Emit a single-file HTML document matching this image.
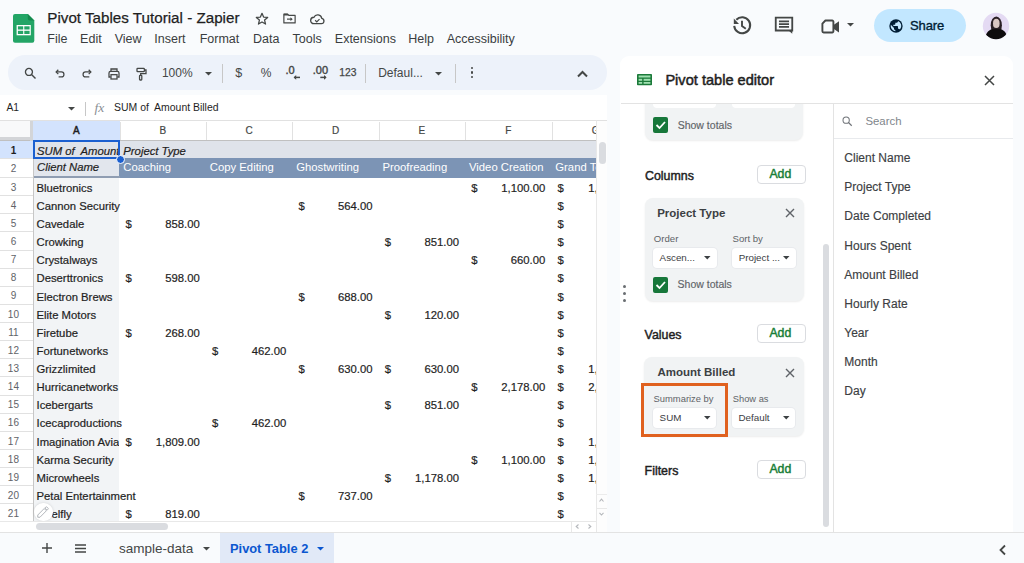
<!DOCTYPE html>
<html><head><meta charset="utf-8"><style>
html,body{margin:0;padding:0;}
body{width:1024px;height:563px;overflow:hidden;position:relative;background:#f9fbfd;font-family:"Liberation Sans", sans-serif;}
.t{position:absolute;white-space:nowrap;line-height:1;}
.g .t{-webkit-text-stroke:0.2px currentColor;}
.r{position:absolute;}
svg.r{overflow:visible}
</style></head><body>
<svg class="r" style="left:12.90px;top:13.80px;" width="21.3" height="28.8" viewBox="0 0 21.3 28.8"><path d="M2 0h12.8l6.5 6.5v20.3a2 2 0 0 1-2 2H2a2 2 0 0 1-2-2V2a2 2 0 0 1 2-2z" fill="#23a566"/><path d="M14.8 0l6.5 6.5h-4.5a2 2 0 0 1-2-2z" fill="#158a4e"/><rect x="3.6" y="11" width="14.2" height="10.3" fill="#fff"/><rect x="4.9" y="12.3" width="5.3" height="3.2" fill="#23a566"/><rect x="11.3" y="12.3" width="5.3" height="3.2" fill="#23a566"/><rect x="4.9" y="16.8" width="5.3" height="3.2" fill="#23a566"/><rect x="11.3" y="16.8" width="5.3" height="3.2" fill="#23a566"/></svg>
<div class="t" style="left:47.30px;top:10.00px;font-size:15.2px;color:#1f1f1f;font-weight:normal;-webkit-text-stroke:0.25px #1f1f1f;">Pivot Tables Tutorial - Zapier</div>
<svg class="r" style="left:254.00px;top:10.80px;" width="16" height="16" viewBox="0 0 24 24"><path d="M12 3.5l2.4 5.6 6.1.5-4.6 4 1.4 6L12 16.4 6.7 19.6l1.4-6-4.6-4 6.1-.5z" fill="none" stroke="#444746" stroke-width="1.9" stroke-linejoin="round"/></svg>
<svg class="r" style="left:281.50px;top:11.00px;" width="15" height="15" viewBox="0 0 24 24"><path d="M3 5h6l2 2h10v12H3z" fill="none" stroke="#444746" stroke-width="1.9" stroke-linejoin="round"/><path d="M3 4.5h6l2 2.5H3z" fill="#444746"/><path d="M8 13h7" stroke="#444746" stroke-width="1.9"/><path d="M13.5 10l3.6 3-3.6 3z" fill="#444746"/></svg>
<svg class="r" style="left:308.50px;top:10.50px;" width="16.5" height="16.5" viewBox="0 0 24 24"><path d="M7 18.5h11a4 4 0 0 0 .6-7.9A6 6 0 0 0 7.2 9.1 4.7 4.7 0 0 0 7 18.5z" fill="none" stroke="#444746" stroke-width="1.9"/><path d="M9 13.5l2.3 2.3 4-4" fill="none" stroke="#444746" stroke-width="1.8"/></svg>
<div class="t" style="left:47.30px;top:33.00px;font-size:12.5px;color:#3a3d40;font-weight:normal;">File</div>
<div class="t" style="left:80.10px;top:33.00px;font-size:12.5px;color:#3a3d40;font-weight:normal;">Edit</div>
<div class="t" style="left:114.70px;top:33.00px;font-size:12.5px;color:#3a3d40;font-weight:normal;">View</div>
<div class="t" style="left:154.30px;top:33.00px;font-size:12.5px;color:#3a3d40;font-weight:normal;">Insert</div>
<div class="t" style="left:199.70px;top:33.00px;font-size:12.5px;color:#3a3d40;font-weight:normal;">Format</div>
<div class="t" style="left:253.00px;top:33.00px;font-size:12.5px;color:#3a3d40;font-weight:normal;">Data</div>
<div class="t" style="left:292.60px;top:33.00px;font-size:12.5px;color:#3a3d40;font-weight:normal;">Tools</div>
<div class="t" style="left:334.80px;top:33.00px;font-size:12.5px;color:#3a3d40;font-weight:normal;">Extensions</div>
<div class="t" style="left:408.20px;top:33.00px;font-size:12.5px;color:#3a3d40;font-weight:normal;">Help</div>
<div class="t" style="left:446.70px;top:33.00px;font-size:12.5px;color:#3a3d40;font-weight:normal;">Accessibility</div>
<svg class="r" style="left:730.00px;top:13.00px;" width="25" height="25" viewBox="0 0 25 25"><path d="M4.2 12.9A8 8 0 1 0 6.3 6.8" fill="none" stroke="#444746" stroke-width="2"/><path d="M3.8 5.6v5.4h5.2z" fill="#444746"/><path d="M12 7.8V13l3.8 2.7" fill="none" stroke="#444746" stroke-width="1.9"/></svg>
<svg class="r" style="left:773.00px;top:14.00px;" width="22" height="22" viewBox="0 0 24 24"><path d="M3 4h18v14H7l-4 0z" fill="none" stroke="#444746" stroke-width="2"/><path d="M17 18l4 3.5V17" fill="#444746"/><path d="M6.5 8h11M6.5 11h11M6.5 14h11" stroke="#444746" stroke-width="1.8"/></svg>
<svg class="r" style="left:819.00px;top:14.00px;" width="24" height="24" viewBox="0 0 24 24"><path d="M6.4 6.5H13.2a1.2 1.2 0 0 1 1.2 1.2V17.3a1.2 1.2 0 0 1-1.2 1.2H4.6a1.2 1.2 0 0 1-1.2-1.2V9.7z" fill="none" stroke="#444746" stroke-width="1.9" stroke-linejoin="round"/><path d="M14.2 11.2l5.8-4v11.2l-5.8-4z" fill="#444746"/></svg>
<svg class="r" style="left:847.00px;top:23.00px;" width="7" height="4" viewBox="0 0 7 4"><path d="M0 0h7L3.5 3.5z" fill="#444746"/></svg>
<div class="r" style="left:873.80px;top:8.50px;width:92.00px;height:33.00px;background:#c2e7ff;border-radius:17px"></div>
<svg class="r" style="left:888.20px;top:17.50px;" width="16" height="16" viewBox="0 0 24 24"><circle cx="12" cy="12" r="10" fill="#001d35"/><path d="M11 19.9A8 8 0 0 1 4.2 10.2L9 15v1a2 2 0 0 0 2 2zm6.9-2.5a2 2 0 0 0-1.9-1.4h-1v-3a1 1 0 0 0-1-1H8v-2h2a1 1 0 0 0 1-1V7h2a2 2 0 0 0 2-2v-.4a8 8 0 0 1 2.9 12.8z" fill="#c2e7ff"/></svg>
<div class="t" style="left:910.00px;top:19.00px;font-size:13px;color:#001d35;font-weight:normal;-webkit-text-stroke:0.35px #001d35;letter-spacing:-0.1px;">Share</div>
<svg class="r" style="left:981.80px;top:11.50px;" width="28" height="28" viewBox="0 0 28 28"><defs><clipPath id="av"><circle cx="14" cy="14" r="13.2"/></clipPath></defs><circle cx="14" cy="14" r="13.2" fill="#e4daf3"/><g clip-path="url(#av)"><ellipse cx="14.3" cy="13.2" rx="5.6" ry="8.6" fill="#2a1f25"/><ellipse cx="14.3" cy="11.4" rx="3.3" ry="4.6" fill="#d9c6c2"/><path d="M2.5 29C3 21.5 6.5 18.5 9.5 17.3h9.6c3 1.2 6.5 4.2 7 11.7z" fill="#0e0c0d"/></g></svg>
<div class="r" style="left:7.80px;top:55.40px;width:599.00px;height:34.40px;background:#edf2fa;border-radius:17.2px"></div>
<svg class="r" style="left:23.00px;top:65.50px;" width="15" height="15" viewBox="0 0 24 24"><circle cx="9.5" cy="9.5" r="5.6" fill="none" stroke="#444746" stroke-width="2.1"/><path d="M13.6 13.6l6.4 6.4" stroke="#444746" stroke-width="2.3"/></svg>
<svg class="r" style="left:52.50px;top:66.00px;" width="15" height="15" viewBox="0 0 24 24"><path d="M8.5 6L5 9.5 8.5 13" fill="none" stroke="#444746" stroke-width="2"/><path d="M5.5 9.5H13.5a4 4 0 0 1 0 8H9" fill="none" stroke="#444746" stroke-width="2"/></svg>
<svg class="r" style="left:79.00px;top:66.00px;" width="15" height="15" viewBox="0 0 24 24"><path d="M15.5 6L19 9.5 15.5 13" fill="none" stroke="#444746" stroke-width="2"/><path d="M18.5 9.5H10.5a4 4 0 0 0 0 8h6" fill="none" stroke="#444746" stroke-width="2"/></svg>
<svg class="r" style="left:106.00px;top:65.50px;" width="16" height="16" viewBox="0 0 24 24"><path d="M7.5 8V4.5h9V8" fill="none" stroke="#444746" stroke-width="1.9"/><path d="M7 16.5H4.5v-6A2.5 2.5 0 0 1 7 8h10a2.5 2.5 0 0 1 2.5 2.5v6H17" fill="none" stroke="#444746" stroke-width="1.9"/><rect x="7.5" y="13" width="9" height="6.5" fill="none" stroke="#444746" stroke-width="1.9"/></svg>
<svg class="r" style="left:132.50px;top:65.50px;" width="16" height="16" viewBox="0 0 24 24"><rect x="6" y="3.5" width="11" height="5" rx="1" fill="none" stroke="#444746" stroke-width="1.9"/><path d="M17 6h2.5v5.5h-8v2.5" fill="none" stroke="#444746" stroke-width="1.9"/><rect x="9.8" y="14" width="3.4" height="7" rx="1" fill="none" stroke="#444746" stroke-width="1.9"/></svg>
<div class="t" style="left:161.90px;top:67.00px;font-size:12px;color:#444746;font-weight:normal;">100%</div>
<svg class="r" style="left:204.50px;top:71.50px;" width="7" height="4" viewBox="0 0 7 4"><path d="M0 0h7L3.5 3.5z" fill="#444746"/></svg>
<div class="r" style="left:222.20px;top:64.00px;width:1.00px;height:19.00px;background:#c7c7c7"></div>
<div class="t" style="left:138.80px;width:200px;text-align:center;top:67.00px;font-size:12.5px;color:#444746;font-weight:normal;">$</div>
<div class="t" style="left:166.00px;width:200px;text-align:center;top:67.00px;font-size:12px;color:#444746;font-weight:normal;">%</div>
<svg class="r" style="left:283.00px;top:63.00px;" width="18" height="20" viewBox="0 0 18 20"><text x="2.5" y="10.6" font-family="Liberation Sans" font-size="11" fill="#444746" stroke="#444746" stroke-width="0.4">.0</text><path d="M17 14.4h-5.8" stroke="#444746" stroke-width="1.5"/><path d="M13.2 12l-2.6 2.4 2.6 2.4z" fill="#444746"/></svg>
<svg class="r" style="left:310.00px;top:63.00px;" width="22" height="20" viewBox="0 0 22 20"><text x="2.8" y="10.6" font-family="Liberation Sans" font-size="11" fill="#444746" stroke="#444746" stroke-width="0.4">.00</text><path d="M10.3 14.4h5.6" stroke="#444746" stroke-width="1.5"/><path d="M14 12l2.6 2.4-2.6 2.4z" fill="#444746"/></svg>
<div class="t" style="left:247.90px;width:200px;text-align:center;top:68.00px;font-size:10.3px;color:#444746;font-weight:normal;-webkit-text-stroke:0.25px #444746;">123</div>
<div class="r" style="left:365.20px;top:64.00px;width:1.00px;height:19.00px;background:#c7c7c7"></div>
<div class="t" style="left:378.20px;top:67.00px;font-size:12px;color:#444746;font-weight:normal;">Defaul...</div>
<svg class="r" style="left:435.30px;top:71.50px;" width="7" height="4" viewBox="0 0 7 4"><path d="M0 0h7L3.5 3.5z" fill="#444746"/></svg>
<div class="r" style="left:454.50px;top:64.00px;width:1.00px;height:19.00px;background:#c7c7c7"></div>
<div class="r" style="left:470.80px;top:66.95px;width:2.50px;height:2.50px;background:#444746;border-radius:50%"></div>
<div class="r" style="left:470.80px;top:71.45px;width:2.50px;height:2.50px;background:#444746;border-radius:50%"></div>
<div class="r" style="left:470.80px;top:75.95px;width:2.50px;height:2.50px;background:#444746;border-radius:50%"></div>
<svg class="r" style="left:575.00px;top:66.00px;" width="15" height="15" viewBox="0 0 15 15"><path d="M3 10.5L7.5 6l4.5 4.5" fill="none" stroke="#444746" stroke-width="2"/></svg>
<div class="r" style="left:0.00px;top:95.00px;width:607.00px;height:25.50px;background:#fff"></div>
<div class="t" style="left:6.50px;top:103.00px;font-size:10.3px;color:#1f1f1f;font-weight:normal;">A1</div>
<svg class="r" style="left:68.00px;top:106.50px;" width="7" height="4" viewBox="0 0 7 4"><path d="M0 0h7L3.5 3.5z" fill="#444746"/></svg>
<div class="r" style="left:85.00px;top:102.00px;width:1.00px;height:14.00px;background:#c7c7c7"></div>
<div class="t" style="left:94.50px;top:101.00px;font-size:13.5px;color:#8a8f94;font-weight:normal;"><i style="font-family:Liberation Serif">fx</i></div>
<div class="t" style="left:114.10px;top:103.00px;font-size:10.45px;color:#1f1f1f;font-weight:normal;">SUM of&nbsp; Amount Billed</div>
<div class="r g" style="left:0;top:0;width:596px;height:521px;overflow:hidden">
<div class="r" style="left:0.00px;top:120.50px;width:596.00px;height:400.50px;background:#fff"></div>
<div class="r" style="left:0.00px;top:120.00px;width:596.00px;height:1.00px;background:#e1e1e1"></div>
<div class="r" style="left:0.00px;top:140.00px;width:596.00px;height:1.00px;background:#c0c0c0"></div>
<div class="r" style="left:33.00px;top:121.00px;width:86.50px;height:19.00px;background:#d3e3fd"></div>
<div class="r" style="left:0.00px;top:121.00px;width:30.00px;height:16.30px;background:#f8f9fa"></div>
<div class="r" style="left:30.00px;top:121.00px;width:3.00px;height:19.50px;background:#d3d5d8"></div>
<div class="r" style="left:0.00px;top:137.30px;width:33.00px;height:3.00px;background:#d3d5d8"></div>
<div class="r" style="left:119.50px;top:121.50px;width:1.00px;height:18.50px;background:#e1e1e1"></div>
<div class="r" style="left:206.00px;top:121.50px;width:1.00px;height:18.50px;background:#e1e1e1"></div>
<div class="r" style="left:292.40px;top:121.50px;width:1.00px;height:18.50px;background:#e1e1e1"></div>
<div class="r" style="left:378.70px;top:121.50px;width:1.00px;height:18.50px;background:#e1e1e1"></div>
<div class="r" style="left:465.20px;top:121.50px;width:1.00px;height:18.50px;background:#e1e1e1"></div>
<div class="r" style="left:551.50px;top:121.50px;width:1.00px;height:18.50px;background:#e1e1e1"></div>
<div class="t" style="left:-23.75px;width:200px;text-align:center;top:126.00px;font-size:10px;color:#1f1f1f;font-weight:normal;-webkit-text-stroke:0.45px #1f1f1f;">A</div>
<div class="t" style="left:62.75px;width:200px;text-align:center;top:126.00px;font-size:10px;color:#444746;font-weight:normal;">B</div>
<div class="t" style="left:149.20px;width:200px;text-align:center;top:126.00px;font-size:10px;color:#444746;font-weight:normal;">C</div>
<div class="t" style="left:235.55px;width:200px;text-align:center;top:126.00px;font-size:10px;color:#444746;font-weight:normal;">D</div>
<div class="t" style="left:321.95px;width:200px;text-align:center;top:126.00px;font-size:10px;color:#444746;font-weight:normal;">E</div>
<div class="t" style="left:408.35px;width:200px;text-align:center;top:126.00px;font-size:10px;color:#444746;font-weight:normal;">F</div>
<div class="t" style="left:495.75px;width:200px;text-align:center;top:126.00px;font-size:10px;color:#444746;font-weight:normal;">G</div>
<div class="r" style="left:33.00px;top:140.80px;width:563.00px;height:17.90px;background:#dfe3ea"></div>
<div class="r" style="left:0.00px;top:140.80px;width:33.00px;height:17.90px;background:#d3e3fd"></div>
<div class="r" style="left:33.00px;top:158.50px;width:86.50px;height:18.00px;background:#e2e6ed"></div>
<div class="r" style="left:119.20px;top:158.40px;width:476.80px;height:20.00px;background:#7c94b5"></div>
<div class="r" style="left:33.00px;top:176.30px;width:86.50px;height:2.10px;background:#8f9db2"></div>
<div class="r" style="left:33.00px;top:177.50px;width:85.50px;height:343.50px;background:#f2f4f6"></div>
<div class="r" style="left:33.00px;top:141.00px;width:1.00px;height:380.00px;background:#c7c7c7"></div>
<div class="r" style="left:0.00px;top:158.20px;width:33.00px;height:1.00px;background:#e1e1e1"></div>
<div class="r" style="left:0.00px;top:177.00px;width:33.00px;height:1.00px;background:#e1e1e1"></div>
<div class="r" style="left:0.00px;top:195.13px;width:33.00px;height:1.00px;background:#e1e1e1"></div>
<div class="r" style="left:0.00px;top:213.26px;width:33.00px;height:1.00px;background:#e1e1e1"></div>
<div class="r" style="left:0.00px;top:231.39px;width:33.00px;height:1.00px;background:#e1e1e1"></div>
<div class="r" style="left:0.00px;top:249.52px;width:33.00px;height:1.00px;background:#e1e1e1"></div>
<div class="r" style="left:0.00px;top:267.65px;width:33.00px;height:1.00px;background:#e1e1e1"></div>
<div class="r" style="left:0.00px;top:285.78px;width:33.00px;height:1.00px;background:#e1e1e1"></div>
<div class="r" style="left:0.00px;top:303.91px;width:33.00px;height:1.00px;background:#e1e1e1"></div>
<div class="r" style="left:0.00px;top:322.04px;width:33.00px;height:1.00px;background:#e1e1e1"></div>
<div class="r" style="left:0.00px;top:340.17px;width:33.00px;height:1.00px;background:#e1e1e1"></div>
<div class="r" style="left:0.00px;top:358.30px;width:33.00px;height:1.00px;background:#e1e1e1"></div>
<div class="r" style="left:0.00px;top:376.43px;width:33.00px;height:1.00px;background:#e1e1e1"></div>
<div class="r" style="left:0.00px;top:394.56px;width:33.00px;height:1.00px;background:#e1e1e1"></div>
<div class="r" style="left:0.00px;top:412.69px;width:33.00px;height:1.00px;background:#e1e1e1"></div>
<div class="r" style="left:0.00px;top:430.82px;width:33.00px;height:1.00px;background:#e1e1e1"></div>
<div class="r" style="left:0.00px;top:448.95px;width:33.00px;height:1.00px;background:#e1e1e1"></div>
<div class="r" style="left:0.00px;top:467.08px;width:33.00px;height:1.00px;background:#e1e1e1"></div>
<div class="r" style="left:0.00px;top:485.21px;width:33.00px;height:1.00px;background:#e1e1e1"></div>
<div class="r" style="left:0.00px;top:503.34px;width:33.00px;height:1.00px;background:#e1e1e1"></div>
<div class="r" style="left:0.00px;top:521.47px;width:33.00px;height:1.00px;background:#e1e1e1"></div>
<div class="t" style="left:-86.60px;width:200px;text-align:center;top:146.00px;font-size:10px;color:#1f1f1f;font-weight:bold;-webkit-text-stroke:0;">1</div>
<div class="t" style="left:-86.60px;width:200px;text-align:center;top:164.00px;font-size:10px;color:#5f6368;font-weight:normal;-webkit-text-stroke:0;">2</div>
<div class="t" style="left:-86.60px;width:200px;text-align:center;top:183.00px;font-size:10px;color:#5f6368;font-weight:normal;-webkit-text-stroke:0;">3</div>
<div class="t" style="left:-86.60px;width:200px;text-align:center;top:201.00px;font-size:10px;color:#5f6368;font-weight:normal;-webkit-text-stroke:0;">4</div>
<div class="t" style="left:-86.60px;width:200px;text-align:center;top:219.00px;font-size:10px;color:#5f6368;font-weight:normal;-webkit-text-stroke:0;">5</div>
<div class="t" style="left:-86.60px;width:200px;text-align:center;top:237.00px;font-size:10px;color:#5f6368;font-weight:normal;-webkit-text-stroke:0;">6</div>
<div class="t" style="left:-86.60px;width:200px;text-align:center;top:255.00px;font-size:10px;color:#5f6368;font-weight:normal;-webkit-text-stroke:0;">7</div>
<div class="t" style="left:-86.60px;width:200px;text-align:center;top:273.00px;font-size:10px;color:#5f6368;font-weight:normal;-webkit-text-stroke:0;">8</div>
<div class="t" style="left:-86.60px;width:200px;text-align:center;top:291.00px;font-size:10px;color:#5f6368;font-weight:normal;-webkit-text-stroke:0;">9</div>
<div class="t" style="left:-86.60px;width:200px;text-align:center;top:310.00px;font-size:10px;color:#5f6368;font-weight:normal;-webkit-text-stroke:0;">10</div>
<div class="t" style="left:-86.60px;width:200px;text-align:center;top:328.00px;font-size:10px;color:#5f6368;font-weight:normal;-webkit-text-stroke:0;">11</div>
<div class="t" style="left:-86.60px;width:200px;text-align:center;top:346.00px;font-size:10px;color:#5f6368;font-weight:normal;-webkit-text-stroke:0;">12</div>
<div class="t" style="left:-86.60px;width:200px;text-align:center;top:364.00px;font-size:10px;color:#5f6368;font-weight:normal;-webkit-text-stroke:0;">13</div>
<div class="t" style="left:-86.60px;width:200px;text-align:center;top:382.00px;font-size:10px;color:#5f6368;font-weight:normal;-webkit-text-stroke:0;">14</div>
<div class="t" style="left:-86.60px;width:200px;text-align:center;top:400.00px;font-size:10px;color:#5f6368;font-weight:normal;-webkit-text-stroke:0;">15</div>
<div class="t" style="left:-86.60px;width:200px;text-align:center;top:418.00px;font-size:10px;color:#5f6368;font-weight:normal;-webkit-text-stroke:0;">16</div>
<div class="t" style="left:-86.60px;width:200px;text-align:center;top:437.00px;font-size:10px;color:#5f6368;font-weight:normal;-webkit-text-stroke:0;">17</div>
<div class="t" style="left:-86.60px;width:200px;text-align:center;top:455.00px;font-size:10px;color:#5f6368;font-weight:normal;-webkit-text-stroke:0;">18</div>
<div class="t" style="left:-86.60px;width:200px;text-align:center;top:473.00px;font-size:10px;color:#5f6368;font-weight:normal;-webkit-text-stroke:0;">19</div>
<div class="t" style="left:-86.60px;width:200px;text-align:center;top:491.00px;font-size:10px;color:#5f6368;font-weight:normal;-webkit-text-stroke:0;">20</div>
<div class="t" style="left:-86.60px;width:200px;text-align:center;top:509.00px;font-size:10px;color:#5f6368;font-weight:normal;-webkit-text-stroke:0;">21</div>
<div class="r" style="left:33.00px;top:140.30px;width:87.00px;height:18.90px;border:2px solid #1a5fd0;box-sizing:border-box"></div>
<div class="r" style="left:116.20px;top:154.80px;width:7.00px;height:7.00px;background:#1a5fd0;border-radius:50%;border:1px solid #fff;box-sizing:content-box"></div>
<div class="t" style="left:37px;top:146px;font-size:11.3px;width:81px;overflow:hidden;color:#1f1f1f;font-style:italic">SUM of&nbsp; Amount Billed</div>
<div class="t" style="left:123.30px;top:146.00px;font-size:11.3px;color:#1f1f1f;font-weight:normal;font-style:italic;">Project Type</div>
<div class="t" style="left:37.00px;top:162.00px;font-size:11.3px;color:#1f1f1f;font-weight:normal;font-style:italic;">Client Name</div>
<div class="t" style="left:123.30px;top:162.00px;font-size:11.3px;color:#ffffff;font-weight:normal;-webkit-text-stroke:0;">Coaching</div>
<div class="t" style="left:209.80px;top:162.00px;font-size:11.3px;color:#ffffff;font-weight:normal;-webkit-text-stroke:0;">Copy Editing</div>
<div class="t" style="left:296.20px;top:162.00px;font-size:11.3px;color:#ffffff;font-weight:normal;-webkit-text-stroke:0;">Ghostwriting</div>
<div class="t" style="left:382.50px;top:162.00px;font-size:11.3px;color:#ffffff;font-weight:normal;-webkit-text-stroke:0;">Proofreading</div>
<div class="t" style="left:469.00px;top:162.00px;font-size:11.3px;color:#ffffff;font-weight:normal;-webkit-text-stroke:0;">Video Creation</div>
<div class="t" style="left:555.30px;top:162.00px;font-size:11.3px;color:#ffffff;font-weight:normal;-webkit-text-stroke:0;">Grand Total</div>
<div class="t" style="left:36.50px;top:183.00px;font-size:11.3px;color:#1f1f1f;font-weight:normal;">Bluetronics</div>
<div class="t" style="left:471.20px;top:183.00px;font-size:11.3px;color:#1f1f1f;font-weight:normal;">$</div>
<div class="t" style="left:245.30px;width:300px;text-align:right;top:183.00px;font-size:11.3px;color:#1f1f1f;font-weight:normal;">1,100.00</div>
<div class="t" style="left:557.50px;top:183.00px;font-size:11.3px;color:#1f1f1f;font-weight:normal;">$</div>
<div class="t" style="left:588.30px;top:183.00px;font-size:11.3px;color:#1f1f1f;font-weight:normal;">1,</div>
<div class="t" style="left:36.50px;top:201.00px;font-size:11.3px;color:#1f1f1f;font-weight:normal;">Cannon Security</div>
<div class="t" style="left:298.40px;top:201.00px;font-size:11.3px;color:#1f1f1f;font-weight:normal;">$</div>
<div class="t" style="left:72.50px;width:300px;text-align:right;top:201.00px;font-size:11.3px;color:#1f1f1f;font-weight:normal;">564.00</div>
<div class="t" style="left:557.50px;top:201.00px;font-size:11.3px;color:#1f1f1f;font-weight:normal;">$</div>
<div class="t" style="left:36.50px;top:219.00px;font-size:11.3px;color:#1f1f1f;font-weight:normal;">Cavedale</div>
<div class="t" style="left:125.50px;top:219.00px;font-size:11.3px;color:#1f1f1f;font-weight:normal;">$</div>
<div class="t" style="left:-100.20px;width:300px;text-align:right;top:219.00px;font-size:11.3px;color:#1f1f1f;font-weight:normal;">858.00</div>
<div class="t" style="left:557.50px;top:219.00px;font-size:11.3px;color:#1f1f1f;font-weight:normal;">$</div>
<div class="t" style="left:36.50px;top:237.00px;font-size:11.3px;color:#1f1f1f;font-weight:normal;">Crowking</div>
<div class="t" style="left:384.70px;top:237.00px;font-size:11.3px;color:#1f1f1f;font-weight:normal;">$</div>
<div class="t" style="left:159.00px;width:300px;text-align:right;top:237.00px;font-size:11.3px;color:#1f1f1f;font-weight:normal;">851.00</div>
<div class="t" style="left:557.50px;top:237.00px;font-size:11.3px;color:#1f1f1f;font-weight:normal;">$</div>
<div class="t" style="left:36.50px;top:255.00px;font-size:11.3px;color:#1f1f1f;font-weight:normal;">Crystalways</div>
<div class="t" style="left:471.20px;top:255.00px;font-size:11.3px;color:#1f1f1f;font-weight:normal;">$</div>
<div class="t" style="left:245.30px;width:300px;text-align:right;top:255.00px;font-size:11.3px;color:#1f1f1f;font-weight:normal;">660.00</div>
<div class="t" style="left:557.50px;top:255.00px;font-size:11.3px;color:#1f1f1f;font-weight:normal;">$</div>
<div class="t" style="left:36.50px;top:273.00px;font-size:11.3px;color:#1f1f1f;font-weight:normal;">Deserttronics</div>
<div class="t" style="left:125.50px;top:273.00px;font-size:11.3px;color:#1f1f1f;font-weight:normal;">$</div>
<div class="t" style="left:-100.20px;width:300px;text-align:right;top:273.00px;font-size:11.3px;color:#1f1f1f;font-weight:normal;">598.00</div>
<div class="t" style="left:557.50px;top:273.00px;font-size:11.3px;color:#1f1f1f;font-weight:normal;">$</div>
<div class="t" style="left:36.50px;top:292.00px;font-size:11.3px;color:#1f1f1f;font-weight:normal;">Electron Brews</div>
<div class="t" style="left:298.40px;top:292.00px;font-size:11.3px;color:#1f1f1f;font-weight:normal;">$</div>
<div class="t" style="left:72.50px;width:300px;text-align:right;top:292.00px;font-size:11.3px;color:#1f1f1f;font-weight:normal;">688.00</div>
<div class="t" style="left:557.50px;top:292.00px;font-size:11.3px;color:#1f1f1f;font-weight:normal;">$</div>
<div class="t" style="left:36.50px;top:310.00px;font-size:11.3px;color:#1f1f1f;font-weight:normal;">Elite Motors</div>
<div class="t" style="left:384.70px;top:310.00px;font-size:11.3px;color:#1f1f1f;font-weight:normal;">$</div>
<div class="t" style="left:159.00px;width:300px;text-align:right;top:310.00px;font-size:11.3px;color:#1f1f1f;font-weight:normal;">120.00</div>
<div class="t" style="left:557.50px;top:310.00px;font-size:11.3px;color:#1f1f1f;font-weight:normal;">$</div>
<div class="t" style="left:36.50px;top:328.00px;font-size:11.3px;color:#1f1f1f;font-weight:normal;">Firetube</div>
<div class="t" style="left:125.50px;top:328.00px;font-size:11.3px;color:#1f1f1f;font-weight:normal;">$</div>
<div class="t" style="left:-100.20px;width:300px;text-align:right;top:328.00px;font-size:11.3px;color:#1f1f1f;font-weight:normal;">268.00</div>
<div class="t" style="left:557.50px;top:328.00px;font-size:11.3px;color:#1f1f1f;font-weight:normal;">$</div>
<div class="t" style="left:36.50px;top:346.00px;font-size:11.3px;color:#1f1f1f;font-weight:normal;">Fortunetworks</div>
<div class="t" style="left:212.00px;top:346.00px;font-size:11.3px;color:#1f1f1f;font-weight:normal;">$</div>
<div class="t" style="left:-13.80px;width:300px;text-align:right;top:346.00px;font-size:11.3px;color:#1f1f1f;font-weight:normal;">462.00</div>
<div class="t" style="left:557.50px;top:346.00px;font-size:11.3px;color:#1f1f1f;font-weight:normal;">$</div>
<div class="t" style="left:36.50px;top:364.00px;font-size:11.3px;color:#1f1f1f;font-weight:normal;">Grizzlimited</div>
<div class="t" style="left:298.40px;top:364.00px;font-size:11.3px;color:#1f1f1f;font-weight:normal;">$</div>
<div class="t" style="left:72.50px;width:300px;text-align:right;top:364.00px;font-size:11.3px;color:#1f1f1f;font-weight:normal;">630.00</div>
<div class="t" style="left:384.70px;top:364.00px;font-size:11.3px;color:#1f1f1f;font-weight:normal;">$</div>
<div class="t" style="left:159.00px;width:300px;text-align:right;top:364.00px;font-size:11.3px;color:#1f1f1f;font-weight:normal;">630.00</div>
<div class="t" style="left:557.50px;top:364.00px;font-size:11.3px;color:#1f1f1f;font-weight:normal;">$</div>
<div class="t" style="left:588.30px;top:364.00px;font-size:11.3px;color:#1f1f1f;font-weight:normal;">1,</div>
<div class="t" style="left:36.50px;top:382.00px;font-size:11.3px;color:#1f1f1f;font-weight:normal;">Hurricanetworks</div>
<div class="t" style="left:471.20px;top:382.00px;font-size:11.3px;color:#1f1f1f;font-weight:normal;">$</div>
<div class="t" style="left:245.30px;width:300px;text-align:right;top:382.00px;font-size:11.3px;color:#1f1f1f;font-weight:normal;">2,178.00</div>
<div class="t" style="left:557.50px;top:382.00px;font-size:11.3px;color:#1f1f1f;font-weight:normal;">$</div>
<div class="t" style="left:588.30px;top:382.00px;font-size:11.3px;color:#1f1f1f;font-weight:normal;">2,</div>
<div class="t" style="left:36.50px;top:400.00px;font-size:11.3px;color:#1f1f1f;font-weight:normal;">Icebergarts</div>
<div class="t" style="left:384.70px;top:400.00px;font-size:11.3px;color:#1f1f1f;font-weight:normal;">$</div>
<div class="t" style="left:159.00px;width:300px;text-align:right;top:400.00px;font-size:11.3px;color:#1f1f1f;font-weight:normal;">851.00</div>
<div class="t" style="left:557.50px;top:400.00px;font-size:11.3px;color:#1f1f1f;font-weight:normal;">$</div>
<div class="t" style="left:36.50px;top:418.00px;font-size:11.3px;color:#1f1f1f;font-weight:normal;">Icecaproductions</div>
<div class="t" style="left:212.00px;top:418.00px;font-size:11.3px;color:#1f1f1f;font-weight:normal;">$</div>
<div class="t" style="left:-13.80px;width:300px;text-align:right;top:418.00px;font-size:11.3px;color:#1f1f1f;font-weight:normal;">462.00</div>
<div class="t" style="left:557.50px;top:418.00px;font-size:11.3px;color:#1f1f1f;font-weight:normal;">$</div>
<div class="t" style="left:36.5px;top:437px;font-size:11.3px;width:82px;overflow:hidden;color:#1f1f1f">Imagination Avia</div>
<div class="t" style="left:125.50px;top:437.00px;font-size:11.3px;color:#1f1f1f;font-weight:normal;">$</div>
<div class="t" style="left:-100.20px;width:300px;text-align:right;top:437.00px;font-size:11.3px;color:#1f1f1f;font-weight:normal;">1,809.00</div>
<div class="t" style="left:557.50px;top:437.00px;font-size:11.3px;color:#1f1f1f;font-weight:normal;">$</div>
<div class="t" style="left:588.30px;top:437.00px;font-size:11.3px;color:#1f1f1f;font-weight:normal;">1,</div>
<div class="t" style="left:36.50px;top:455.00px;font-size:11.3px;color:#1f1f1f;font-weight:normal;">Karma Security</div>
<div class="t" style="left:471.20px;top:455.00px;font-size:11.3px;color:#1f1f1f;font-weight:normal;">$</div>
<div class="t" style="left:245.30px;width:300px;text-align:right;top:455.00px;font-size:11.3px;color:#1f1f1f;font-weight:normal;">1,100.00</div>
<div class="t" style="left:557.50px;top:455.00px;font-size:11.3px;color:#1f1f1f;font-weight:normal;">$</div>
<div class="t" style="left:588.30px;top:455.00px;font-size:11.3px;color:#1f1f1f;font-weight:normal;">1,</div>
<div class="t" style="left:36.50px;top:473.00px;font-size:11.3px;color:#1f1f1f;font-weight:normal;">Microwheels</div>
<div class="t" style="left:384.70px;top:473.00px;font-size:11.3px;color:#1f1f1f;font-weight:normal;">$</div>
<div class="t" style="left:159.00px;width:300px;text-align:right;top:473.00px;font-size:11.3px;color:#1f1f1f;font-weight:normal;">1,178.00</div>
<div class="t" style="left:557.50px;top:473.00px;font-size:11.3px;color:#1f1f1f;font-weight:normal;">$</div>
<div class="t" style="left:588.30px;top:473.00px;font-size:11.3px;color:#1f1f1f;font-weight:normal;">1,</div>
<div class="t" style="left:36.50px;top:491.00px;font-size:11.3px;color:#1f1f1f;font-weight:normal;">Petal Entertainment</div>
<div class="t" style="left:298.40px;top:491.00px;font-size:11.3px;color:#1f1f1f;font-weight:normal;">$</div>
<div class="t" style="left:72.50px;width:300px;text-align:right;top:491.00px;font-size:11.3px;color:#1f1f1f;font-weight:normal;">737.00</div>
<div class="t" style="left:557.50px;top:491.00px;font-size:11.3px;color:#1f1f1f;font-weight:normal;">$</div>
<div class="t" style="left:51.50px;top:509.00px;font-size:11.3px;color:#1f1f1f;font-weight:normal;">elfly</div>
<div class="t" style="left:125.50px;top:509.00px;font-size:11.3px;color:#1f1f1f;font-weight:normal;">$</div>
<div class="t" style="left:-100.20px;width:300px;text-align:right;top:509.00px;font-size:11.3px;color:#1f1f1f;font-weight:normal;">819.00</div>
<div class="t" style="left:557.50px;top:509.00px;font-size:11.3px;color:#1f1f1f;font-weight:normal;">$</div>
<div class="r" style="left:34.00px;top:503.00px;width:19.00px;height:18.00px;background:#fff;border-radius:9px;box-shadow:0 0 3px rgba(0,0,0,.15)"></div>
<svg class="r" style="left:36.00px;top:505.00px;" width="14" height="14" viewBox="0 0 24 24"><path d="M3 17.2V21h3.8L17.8 9.9 14 6.1zM20.7 7a1 1 0 0 0 0-1.4l-2.3-2.3a1 1 0 0 0-1.4 0l-1.8 1.8 3.8 3.8z" fill="none" stroke="#9aa0a6" stroke-width="1.3"/></svg>
</div>
<div class="r" style="left:596.00px;top:120.00px;width:11.00px;height:412.00px;background:#fdfdfd;border-left:1px solid #e8e8e8;border-top:1px solid #e1e1e1;box-sizing:border-box"></div>
<div class="r" style="left:598.50px;top:141.50px;width:7.50px;height:22.00px;background:#dadce0;border-radius:4px"></div>
<div class="r" style="left:596.00px;top:494.00px;width:11.00px;height:1.00px;background:#ececec"></div>
<div class="r" style="left:596.00px;top:507.50px;width:11.00px;height:1.00px;background:#e8e8e8"></div>
<svg class="r" style="left:599.00px;top:498.00px;" width="5" height="4" viewBox="0 0 5 4"><path d="M0.5 3.5L2.5 1.2 4.5 3.5" fill="none" stroke="#b4b7bb" stroke-width="1.1"/></svg>
<svg class="r" style="left:599.00px;top:512.00px;" width="5" height="4" viewBox="0 0 5 4"><path d="M0.5 0.8L2.5 3 4.5 0.8" fill="none" stroke="#b4b7bb" stroke-width="1.1"/></svg>
<div class="r" style="left:0.00px;top:521.00px;width:596.00px;height:11.00px;background:#fff;border-top:1px solid #e8e8e8;box-sizing:border-box"></div>
<div class="r" style="left:36.00px;top:523.20px;width:131.50px;height:7.00px;background:#dadce0;border-radius:4px"></div>
<div class="r" style="left:570.50px;top:522.00px;width:1.00px;height:10.00px;background:#e8e8e8"></div>
<svg class="r" style="left:574.50px;top:524.00px;" width="4" height="5" viewBox="0 0 4 5"><path d="M3.5 0.5L1.2 2.5 3.5 4.5" fill="none" stroke="#b4b7bb" stroke-width="1.1"/></svg>
<svg class="r" style="left:588.00px;top:524.00px;" width="4" height="5" viewBox="0 0 4 5"><path d="M0.5 0.5L2.8 2.5 0.5 4.5" fill="none" stroke="#b4b7bb" stroke-width="1.1"/></svg>
<div class="r" style="left:0.00px;top:532.00px;width:1024.00px;height:31.00px;background:#f9fbfd;border-top:1px solid #e3e3e3;box-sizing:border-box"></div>
<svg class="r" style="left:40.50px;top:542.00px;" width="12" height="12" viewBox="0 0 12 12"><path d="M6 1v10M1 6h10" stroke="#444746" stroke-width="1.4"/></svg>
<svg class="r" style="left:73.50px;top:541.50px;" width="13" height="13" viewBox="0 0 13 13"><path d="M1 3h11M1 6.5h11M1 10h11" stroke="#444746" stroke-width="1.4"/></svg>
<div class="t" style="left:118.90px;top:542.00px;font-size:13.5px;color:#444746;font-weight:normal;">sample-data</div>
<svg class="r" style="left:202.50px;top:546.50px;" width="7" height="4" viewBox="0 0 7 4"><path d="M0 0h7L3.5 3.5z" fill="#444746"/></svg>
<div class="r" style="left:219.80px;top:533.00px;width:114.40px;height:30.00px;background:#e1e9f7"></div>
<div class="t" style="left:230.00px;top:543.00px;font-size:12.85px;color:#0b57d0;font-weight:bold;">Pivot Table 2</div>
<svg class="r" style="left:317.00px;top:546.50px;" width="7" height="4" viewBox="0 0 7 4"><path d="M0 0h7L3.5 3.5z" fill="#0b57d0"/></svg>
<svg class="r" style="left:996.00px;top:543.00px;" width="14" height="14" viewBox="0 0 14 14"><path d="M9 2.5L4.5 7 9 11.5" fill="none" stroke="#444746" stroke-width="1.8"/></svg>
<div class="r" style="left:620.00px;top:56.00px;width:393.00px;height:476.00px;background:#fff;border-radius:9px 9px 0 0"></div>
<div class="r" style="left:620.50px;top:103.00px;width:392.50px;height:1.00px;background:#e3e3e3"></div>
<svg class="r" style="left:637.00px;top:73.80px;" width="15" height="11.3" viewBox="0 0 15 11.3"><rect x="0" y="0" width="15" height="11.3" rx="0.8" fill="#1b7a3a"/><rect x="1.6" y="1.5" width="11.8" height="2" fill="#9fe0b0"/><rect x="1.6" y="4.8" width="3.6" height="2" fill="#9fe0b0"/><rect x="6.6" y="4.8" width="6.8" height="2" fill="#9fe0b0"/><rect x="1.6" y="8" width="3.6" height="1.8" fill="#9fe0b0"/><rect x="6.6" y="8" width="6.8" height="1.8" fill="#9fe0b0"/></svg>
<div class="t" style="left:665.40px;top:73.00px;font-size:14.6px;color:#1f1f1f;font-weight:normal;-webkit-text-stroke:0.5px #1f1f1f;">Pivot table editor</div>
<svg class="r" style="left:984.30px;top:75.20px;" width="11" height="11" viewBox="0 0 11 11"><path d="M1 1l9 9M10 1l-9 9" stroke="#444746" stroke-width="1.5"/></svg>
<div class="r" style="left:622.80px;top:284.70px;width:3.50px;height:3.50px;background:#6a6e72;border-radius:50%"></div>
<div class="r" style="left:622.80px;top:291.60px;width:3.50px;height:3.50px;background:#6a6e72;border-radius:50%"></div>
<div class="r" style="left:622.80px;top:298.50px;width:3.50px;height:3.50px;background:#6a6e72;border-radius:50%"></div>
<div class="r" style="left:620.5px;top:104px;width:212.5px;height:428px;overflow:hidden">
<div class="r" style="left:24.20px;top:-44.00px;width:158.10px;height:79.80px;background:#f1f3f4;border-radius:8px;box-shadow:0 1px 2px rgba(0,0,0,.08)"></div>
<div class="r" style="left:32.10px;top:-16.00px;width:63.20px;height:20.20px;background:#fff;border-radius:4px"></div>
<div class="r" style="left:111.20px;top:-16.00px;width:63.60px;height:20.20px;background:#fff;border-radius:4px"></div>
<div class="r" style="left:32.10px;top:13.20px;width:15.50px;height:15.50px;background:#17773a;border-radius:2px"></div>
<svg class="r" style="left:32.10px;top:13.20px" width="15.5" height="15.5" viewBox="0 0 15.5 15.5"><path d="M3.5 8l3 3 5.5-6" fill="none" stroke="#fff" stroke-width="1.8"/></svg>
<div class="t" style="left:57.20px;top:16.00px;font-size:10.5px;color:#5f6368;font-weight:normal;-webkit-text-stroke:0.15px #5f6368;">Show totals</div>
<div class="t" style="left:24.50px;top:66.00px;font-size:12.4px;color:#1f1f1f;font-weight:normal;-webkit-text-stroke:0.45px #1f1f1f;">Columns</div>
<div class="r" style="left:136.80px;top:60.80px;width:48.30px;height:19.50px;background:#fff;border:1px solid #dadce0;border-radius:4px;box-sizing:border-box"></div>
<div class="t" style="left:148.90px;top:64.00px;font-size:12.3px;color:#188038;font-weight:normal;-webkit-text-stroke:0.45px #188038;">Add</div>
<div class="r" style="left:24.50px;top:94.30px;width:159.20px;height:102.40px;background:#f1f3f4;border-radius:8px;box-shadow:0 1px 2px rgba(0,0,0,.08)"></div>
<div class="t" style="left:36.70px;top:104.00px;font-size:11.5px;color:#3c4043;font-weight:bold;">Project Type</div>
<svg class="r" style="left:164.50px;top:104.00px" width="10" height="10" viewBox="0 0 10 10"><path d="M1 1l8 8M9 1l-8 8" stroke="#5f6368" stroke-width="1.4"/></svg>
<div class="t" style="left:33.30px;top:130.00px;font-size:9.6px;color:#5f6368;font-weight:normal;">Order</div>
<div class="t" style="left:112.00px;top:130.00px;font-size:9.6px;color:#5f6368;font-weight:normal;">Sort by</div>
<div class="r" style="left:32.10px;top:144.10px;width:64.00px;height:20.00px;background:#fff;border-radius:4px;box-shadow:0 0 0 1px #e8eaed"></div>
<div class="t" style="left:39.10px;top:149.00px;font-size:9.8px;color:#3c4043;font-weight:normal;">Ascen...</div>
<svg class="r" style="left:83.80px;top:152.40px" width="6.5" height="3.5" viewBox="0 0 6.5 3.5"><path d="M0 0h6.5L3.25 3.5z" fill="#3c4043"/></svg>
<div class="r" style="left:111.20px;top:144.10px;width:63.90px;height:20.00px;background:#fff;border-radius:4px;box-shadow:0 0 0 1px #e8eaed"></div>
<div class="t" style="left:118.20px;top:149.00px;font-size:9.8px;color:#3c4043;font-weight:normal;">Project ...</div>
<svg class="r" style="left:162.80px;top:152.40px" width="6.5" height="3.5" viewBox="0 0 6.5 3.5"><path d="M0 0h6.5L3.25 3.5z" fill="#3c4043"/></svg>
<div class="r" style="left:32.10px;top:173.00px;width:15.50px;height:15.50px;background:#17773a;border-radius:2px"></div>
<svg class="r" style="left:32.10px;top:173.00px" width="15.5" height="15.5" viewBox="0 0 15.5 15.5"><path d="M3.5 8l3 3 5.5-6" fill="none" stroke="#fff" stroke-width="1.8"/></svg>
<div class="t" style="left:57.10px;top:175.00px;font-size:10.5px;color:#5f6368;font-weight:normal;-webkit-text-stroke:0.15px #5f6368;">Show totals</div>
<div class="t" style="left:24.10px;top:225.00px;font-size:12.4px;color:#1f1f1f;font-weight:normal;-webkit-text-stroke:0.45px #1f1f1f;">Values</div>
<div class="r" style="left:136.80px;top:219.60px;width:48.30px;height:19.50px;background:#fff;border:1px solid #dadce0;border-radius:4px;box-sizing:border-box"></div>
<div class="t" style="left:148.90px;top:223.00px;font-size:12.3px;color:#188038;font-weight:normal;-webkit-text-stroke:0.45px #188038;">Add</div>
<div class="r" style="left:23.00px;top:253.30px;width:160.90px;height:79.00px;background:#f1f3f4;border-radius:8px;box-shadow:0 1px 2px rgba(0,0,0,.08)"></div>
<div class="t" style="left:36.90px;top:263.00px;font-size:11.5px;color:#3c4043;font-weight:bold;">Amount Billed</div>
<svg class="r" style="left:164.50px;top:264.00px" width="10" height="10" viewBox="0 0 10 10"><path d="M1 1l8 8M9 1l-8 8" stroke="#5f6368" stroke-width="1.4"/></svg>
<div class="t" style="left:33.10px;top:290.00px;font-size:9.4px;color:#5f6368;font-weight:normal;">Summarize by</div>
<div class="t" style="left:112.30px;top:291.00px;font-size:9.3px;color:#5f6368;font-weight:normal;">Show as</div>
<div class="r" style="left:32.10px;top:304.10px;width:63.90px;height:20.20px;background:#fff;border-radius:4px;box-shadow:0 0 0 1px #e8eaed"></div>
<div class="t" style="left:39.10px;top:309.00px;font-size:9.8px;color:#3c4043;font-weight:normal;">SUM</div>
<svg class="r" style="left:83.70px;top:312.40px" width="6.5" height="3.5" viewBox="0 0 6.5 3.5"><path d="M0 0h6.5L3.25 3.5z" fill="#3c4043"/></svg>
<div class="r" style="left:111.00px;top:304.10px;width:63.30px;height:20.20px;background:#fff;border-radius:4px;box-shadow:0 0 0 1px #e8eaed"></div>
<div class="t" style="left:118.00px;top:309.00px;font-size:9.8px;color:#3c4043;font-weight:normal;">Default</div>
<svg class="r" style="left:162.00px;top:312.40px" width="6.5" height="3.5" viewBox="0 0 6.5 3.5"><path d="M0 0h6.5L3.25 3.5z" fill="#3c4043"/></svg>
<div class="r" style="left:20.90px;top:278.90px;width:86.30px;height:54.00px;border:3px solid #e0611f;box-sizing:border-box"></div>
<div class="t" style="left:24.10px;top:361.00px;font-size:12.4px;color:#1f1f1f;font-weight:normal;-webkit-text-stroke:0.45px #1f1f1f;">Filters</div>
<div class="r" style="left:136.80px;top:355.80px;width:48.30px;height:19.50px;background:#fff;border:1px solid #dadce0;border-radius:4px;box-sizing:border-box"></div>
<div class="t" style="left:148.90px;top:359.00px;font-size:12.3px;color:#188038;font-weight:normal;-webkit-text-stroke:0.45px #188038;">Add</div>
<div class="r" style="left:202.50px;top:139.90px;width:6.10px;height:283.00px;background:#dadce0;border-radius:3px"></div>
</div>
<div class="r" style="left:833.00px;top:104.00px;width:1.00px;height:428.00px;background:#e3e3e3"></div>
<svg class="r" style="left:840.50px;top:114.50px;" width="13" height="13" viewBox="0 0 24 24"><circle cx="9.5" cy="9.5" r="5.8" fill="none" stroke="#6f7378" stroke-width="1.9"/><path d="M13.8 13.8l6 6" stroke="#6f7378" stroke-width="2.1"/></svg>
<div class="t" style="left:865.40px;top:116.00px;font-size:11.4px;color:#80868b;font-weight:normal;">Search</div>
<div class="r" style="left:834.00px;top:138.00px;width:179.00px;height:1.00px;background:#e8eaed"></div>
<div class="t" style="left:844.30px;top:152.00px;font-size:12px;color:#3c4043;font-weight:normal;-webkit-text-stroke:0.15px #3c4043;">Client Name</div>
<div class="t" style="left:844.30px;top:181.00px;font-size:12px;color:#3c4043;font-weight:normal;-webkit-text-stroke:0.15px #3c4043;">Project Type</div>
<div class="t" style="left:844.30px;top:210.00px;font-size:12px;color:#3c4043;font-weight:normal;-webkit-text-stroke:0.15px #3c4043;">Date Completed</div>
<div class="t" style="left:844.30px;top:240.00px;font-size:12px;color:#3c4043;font-weight:normal;-webkit-text-stroke:0.15px #3c4043;">Hours Spent</div>
<div class="t" style="left:844.30px;top:269.00px;font-size:12px;color:#3c4043;font-weight:normal;-webkit-text-stroke:0.15px #3c4043;">Amount Billed</div>
<div class="t" style="left:844.30px;top:298.00px;font-size:12px;color:#3c4043;font-weight:normal;-webkit-text-stroke:0.15px #3c4043;">Hourly Rate</div>
<div class="t" style="left:844.30px;top:327.00px;font-size:12px;color:#3c4043;font-weight:normal;-webkit-text-stroke:0.15px #3c4043;">Year</div>
<div class="t" style="left:844.30px;top:356.00px;font-size:12px;color:#3c4043;font-weight:normal;-webkit-text-stroke:0.15px #3c4043;">Month</div>
<div class="t" style="left:844.30px;top:385.00px;font-size:12px;color:#3c4043;font-weight:normal;-webkit-text-stroke:0.15px #3c4043;">Day</div>
<div class="r" style="left:1013.00px;top:55.00px;width:11.00px;height:477.00px;background:#f9fbfd"></div>
</body></html>
